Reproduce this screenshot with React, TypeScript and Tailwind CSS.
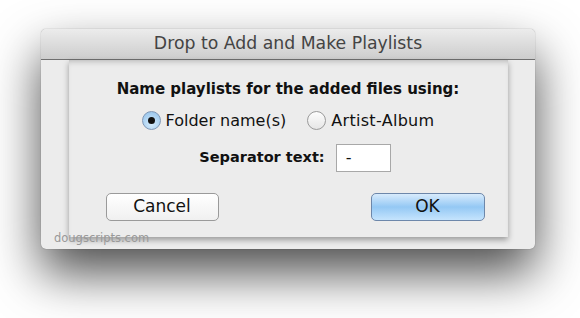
export default function App() {
  return (
    <div className="h-[318px] w-[580px] overflow-hidden bg-white pl-[41px] pt-[29px] font-['Lucida_Grande','DejaVu_Sans',sans-serif]">
      <div className="relative flex h-[220px] w-[494px] flex-col rounded-[5px] bg-[#ececec] shadow-[0_24px_50px_rgba(0,0,0,0.7),0_0_1px_rgba(0,0,0,0.5)]">
        <div className="flex h-[31px] items-center justify-center rounded-t-[5px] border-b border-[#6f6f6f] bg-gradient-to-b from-[#ececec] to-[#cdcdcd] text-[17.3px] text-[#444]">
          Drop to Add and Make Playlists
        </div>
        <div className="mx-auto flex h-[177px] w-[439px] flex-col items-center bg-[#ececec] shadow-[0_3px_6px_rgba(0,0,0,0.35),inset_0_5px_6px_-4px_rgba(0,0,0,0.25)]">
          <div className="mt-[18px] text-[15px] font-bold text-[#111]">
            Name playlists for the added files using:
          </div>
          <div className="mt-[8px] flex items-center text-[16px] text-[#111]">
            <span className="flex h-[19px] w-[19px] items-center justify-center rounded-full border border-[#7f97b6] bg-[radial-gradient(circle_at_50%_70%,#d6ecfd,#8ebfe9)]">
              <span className="h-[7px] w-[7px] rounded-full bg-[#111]" />
            </span>
            <span className="ml-[5px]">Folder name(s)</span>
            <span className="ml-[21px] h-[19px] w-[19px] rounded-full border border-[#9a9a9a] bg-gradient-to-b from-[#fdfdfd] to-[#e6e6e6]" />
            <span className="ml-[5px] tracking-[0.3px]">Artist-Album</span>
          </div>
          <div className="ml-[14px] mt-[11px] flex items-center">
            <span className="text-[14.5px] font-bold text-[#111]">Separator text:</span>
            <div className="ml-[11px] flex h-[28px] w-[55px] items-center border border-[#a8a8a8] bg-white pl-[9px] text-[16px] text-[#111]">
              -
            </div>
          </div>
          <div className="mt-[21px] flex w-full justify-between pl-[37px] pr-[23px]">
            <div className="flex h-[28px] w-[113px] items-center justify-center rounded-[5px] border border-[#9a9a9a] bg-gradient-to-b from-white to-[#f0f0f0] text-[17px] text-[#111]">
              Cancel
            </div>
            <div className="flex h-[28px] w-[114px] items-center justify-center rounded-[5px] border border-[#6d87aa] bg-gradient-to-b from-[#d8ebfc] via-[#94c8f4] to-[#c5e4fd] text-[17px] text-[#111]">
              OK
            </div>
          </div>
        </div>
        <div className="absolute bottom-[2px] left-[13px] text-[11.5px] text-[#999]">dougscripts.com</div>
      </div>
    </div>
  );
}
